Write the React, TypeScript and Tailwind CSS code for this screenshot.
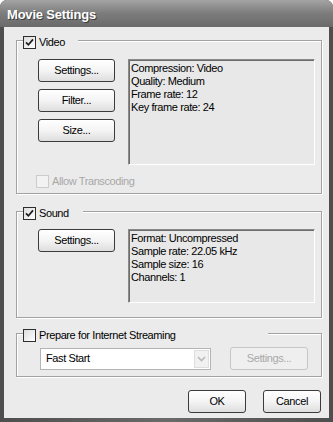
import React from 'react';

const ui = "font-['Liberation_Sans',Arial,sans-serif] text-[11px] tracking-[-0.4px] text-black";

function CheckBox({ checked, disabled }: { checked?: boolean; disabled?: boolean }) {
  return (
    <span
      className={`flex h-[13px] w-[13px] shrink-0 items-center justify-center border ${
        disabled ? 'border-[#cbcbcb] bg-[#f2f2f2]' : 'border-[#2e2e2e] bg-gradient-to-br from-[#dcdcdc] to-white'
      }`}
    >
      {checked && (
        <svg width="9" height="9" viewBox="0 0 9 9">
          <path d="M1 4.3 L3.4 6.8 L8 1.4" fill="none" stroke="#1e1e1e" strokeWidth="1.7" />
        </svg>
      )}
    </span>
  );
}

function Button({ label, width, disabled }: { label: string; width: string; disabled?: boolean }) {
  return (
    <button
      className={`flex h-[23px] items-center justify-center rounded-[3px] border ${width} ${
        disabled
          ? 'h-[22px] border-[#c6c6c6] bg-[#efefef] text-[#a9a9a9]'
          : 'border-[#3b3b3b] bg-gradient-to-b from-white via-[#f4f4f4] to-[#dedede]'
      }`}
    >
      {label}
    </button>
  );
}

function Group({
  label,
  legendWidth,
  checked,
  className,
  children,
}: {
  label: string;
  legendWidth: string;
  checked?: boolean;
  className: string;
  children: React.ReactNode;
}) {
  return (
    <div className={`relative border border-[#a2a2a2] shadow-[inset_1px_1px_0_#fff,1px_1px_0_#fff] ${className}`}>
      <div className={`absolute -top-[7px] left-[6px] flex items-center gap-[3px] bg-[#ebebeb] ${legendWidth}`}>
        <CheckBox checked={checked} />
        <span>{label}</span>
      </div>
      {children}
    </div>
  );
}

function InfoBox({ lines, height }: { lines: string[]; height: string }) {
  return (
    <div
      className={`w-[187px] ${height} border border-b-white border-l-[#8a8a8a] border-r-white border-t-[#8a8a8a] bg-[#e8e8e8] px-[2px] pt-[2px] leading-[13px] shadow-[inset_1px_1px_0_#6c6c6c]`}
    >
      {lines.map((l) => (
        <div key={l}>{l}</div>
      ))}
    </div>
  );
}

export default function App() {
  return (
    <div className={`h-[422px] w-[333px] bg-white ${ui}`}>
      <div className="flex h-full w-full flex-col overflow-hidden rounded-t-[7px] bg-gradient-to-r from-[#4e4e4e] via-[#6a6a6a] to-[#4e4e4e]">
        <div className="flex h-[27px] shrink-0 items-center bg-gradient-to-b from-[#a4a4a4] via-[#7c7c7c] to-[#6a6a6a] pl-[7px] pt-[2px]">
          <span className="text-[13px] font-bold tracking-[-0.2px] text-white [text-shadow:1px_1px_0_#3e3e3e]">
            Movie Settings
          </span>
        </div>

        <div className="mx-[4px] mb-[4px] flex flex-1 flex-col bg-[#ebebeb] pl-[12px] pr-[7px] pt-[13px]">
          <Group label="Video" legendWidth="w-[55px]" checked className="h-[154px]">
            <div className="flex gap-[13px] pl-[21px] pt-[18px]">
              <div className="flex flex-col gap-[7px]">
                <Button label="Settings..." width="w-[77px]" />
                <Button label="Filter..." width="w-[77px]" />
                <Button label="Size..." width="w-[77px]" />
              </div>
              <InfoBox
                height="h-[106px]"
                lines={['Compression: Video', 'Quality: Medium', 'Frame rate: 12', 'Key frame rate: 24']}
              />
            </div>
            <div className="mt-[8px] flex items-center gap-[3px] pl-[19px] text-[#a8a8a8]">
              <CheckBox disabled />
              <span>Allow Transcoding</span>
            </div>
          </Group>

          <Group label="Sound" legendWidth="w-[60px]" checked className="mt-[17px] h-[107px]">
            <div className="flex gap-[13px] pl-[21px] pt-[17px]">
              <Button label="Settings..." width="w-[77px]" />
              <InfoBox
                height="h-[74px]"
                lines={['Format: Uncompressed', 'Sample rate: 22.05 kHz', 'Sample size: 16', 'Channels: 1']}
              />
            </div>
          </Group>

          <Group label="Prepare for Internet Streaming" legendWidth="w-[245px]" className="mt-[15px] h-[44px]">
            <div className="flex items-center gap-[19px] pl-[23px] pt-[13px]">
              <div className="flex h-[22px] w-[171px] items-center border border-[#b4b4b4] bg-white pl-[5px]">
                <span className="flex-1">Fast Start</span>
                <span className="mr-[1px] flex h-[18px] w-[15px] items-center justify-center border border-[#dedede] bg-[#f1f1f1]">
                  <svg width="9" height="6" viewBox="0 0 9 6">
                    <path d="M1 1 L4.5 4.5 L8 1" fill="none" stroke="#b9b9b9" strokeWidth="1.6" />
                  </svg>
                </span>
              </div>
              <Button label="Settings..." width="w-[78px]" disabled />
            </div>
          </Group>

          <div className="mr-[1px] mt-[13px] flex justify-end gap-[17px]">
            <Button label="OK" width="w-[58px]" />
            <Button label="Cancel" width="w-[58px]" />
          </div>
        </div>
      </div>
    </div>
  );
}
